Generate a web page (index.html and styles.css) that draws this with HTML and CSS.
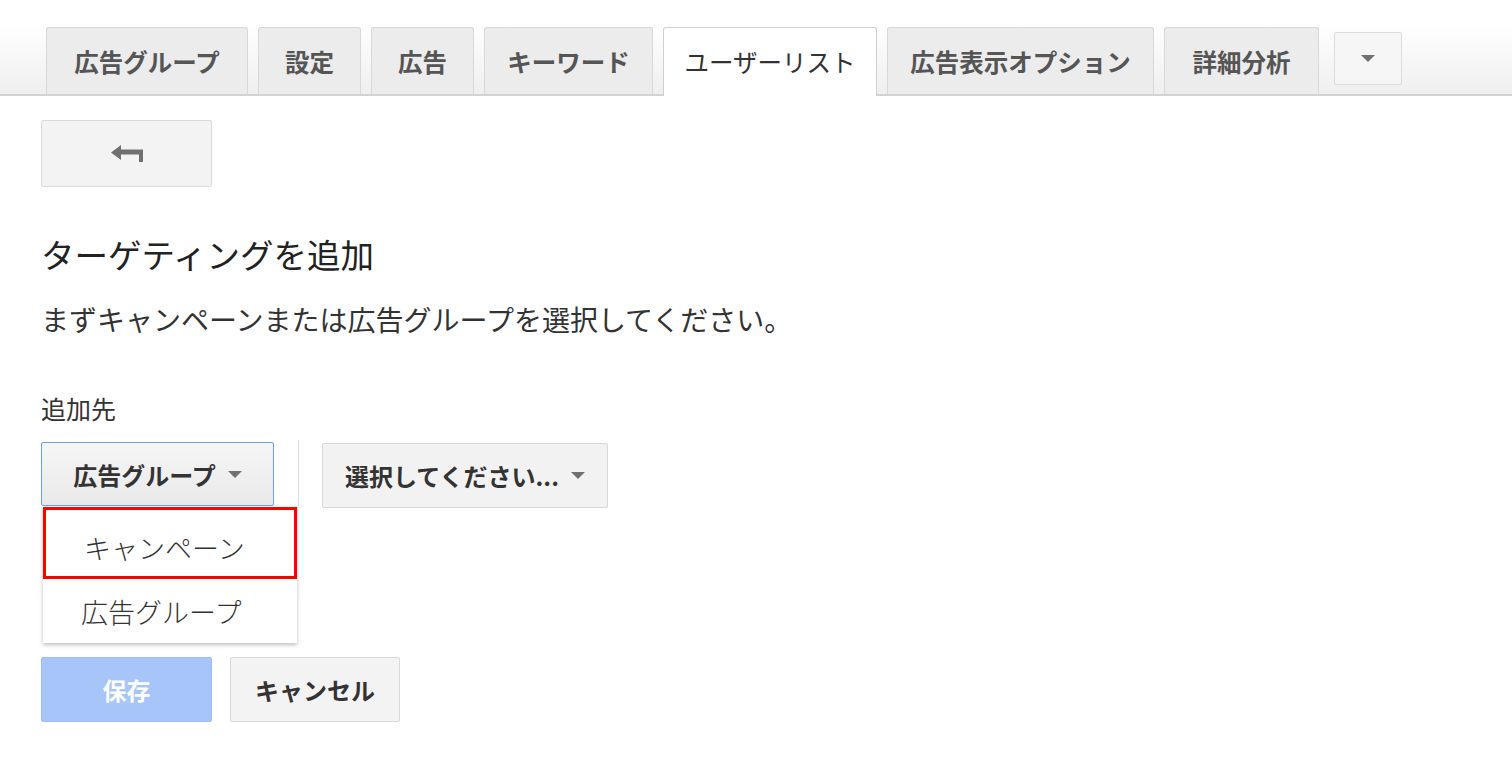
FILE: index.html
```html
<!DOCTYPE html>
<html lang="ja">
<head>
  <meta charset="UTF-8" />
  <title>ターゲティングを追加</title>
  <link rel="stylesheet" href="styles.css">
</head>
<body>

  <div class="tabbar">
    <div class="tab">広告グループ</div>
    <div class="tab">設定</div>
    <div class="tab">広告</div>
    <div class="tab">キーワード</div>
    <div class="tab active">ユーザーリスト</div>
    <div class="tab">広告表示オプション</div>
    <div class="tab">詳細分析</div>
    <div class="more"><span class="caret"></span></div>
  </div>

  <div class="content">
    <button class="back">
      <svg width="32" height="18" viewBox="0 0 32 18"><path d="M0 7.5L10 0V4.5H32V17H28V9.5H10V15Z" fill="#707070"/></svg>
    </button>

    <h1>ターゲティングを追加</h1>
    <p class="lead">まずキャンペーンまたは広告グループを選択してください。</p>

    <div class="label">追加先</div>

    <div class="pickrow">
      <button class="pick focus">広告グループ <span class="caret"></span></button>
      <div class="sep"></div>
      <button class="pick wide">選択してください... <span class="caret"></span></button>

      <div class="menu">
        <div class="item hl">キャンペーン</div>
        <div class="item">広告グループ</div>
      </div>
    </div>

    <div class="actions">
      <button class="btn save">保存</button>
      <button class="btn cancel">キャンセル</button>
    </div>
  </div>

</body>
</html>
```

FILE: styles.css
```css
body{
  margin:0;
  font-family:"Noto Sans CJK JP","Liberation Sans",sans-serif;
  color:#333;
  background:#fff
}
.tabbar{
  height:94px;
  display:flex;
  align-items:flex-end;
  gap:10px;
  padding-left:46px;
  border-bottom:2px solid #d3d3d3;
  background:linear-gradient(#fff 25%,#efefef)
}
.tab{
  box-sizing:border-box;
  height:67px;
  display:flex;
  align-items:center;
  justify-content:center;
  background:#ececec;
  border:1px solid #d8d8d8;
  border-bottom:none;
  border-radius:3px 3px 0 0;
  font-size:24.5px;
  font-weight:bold;
  color:#555
}
.tab:nth-child(1){width:202px}
.tab:nth-child(2){width:103px}
.tab:nth-child(3){width:103px}
.tab:nth-child(4){width:169px}
.tab:nth-child(5){width:214px}
.tab:nth-child(6){width:267px}
.tab:nth-child(7){width:155px}
.tab.active{
  background:#fff;
  border-color:#cfcfcf;
  height:69px;
  margin-bottom:-2px;
  padding-bottom:2px;
  font-weight:normal;
  color:#333
}
.more{
  box-sizing:border-box;
  width:68px;
  height:53px;
  margin:0 0 9px 5px;
  display:flex;
  align-items:center;
  justify-content:center;
  background:#f6f6f6;
  border:1px solid #dcdcdc;
  border-radius:2px
}
.caret{
  display:inline-block;
  width:0;
  height:0;
  border-left:7px solid transparent;
  border-right:7px solid transparent;
  border-top:7px solid #707070;
  vertical-align:middle
}
.content{padding-left:41px}
button{font-family:inherit;cursor:pointer}
.back{
  margin-top:24px;
  width:171px;
  height:67px;
  background:#f3f3f3;
  border:1px solid #dadada;
  border-radius:2px;
  display:flex;
  align-items:center;
  justify-content:center
}
h1{
  margin:47px 0 0;
  font-size:33.5px;
  line-height:40px;
  font-weight:normal;
  color:#222
}
.lead{
  margin:27px 0 0;
  font-size:28px;
  line-height:36px;
  color:#333
}
.label{
  margin-top:55px;
  font-size:25px;
  line-height:32px;
  color:#333
}
.pickrow{
  position:relative;
  margin-top:18px;
  display:flex;
  align-items:flex-start
}
.pick{
  box-sizing:border-box;
  height:64px;
  width:233px;
  background:linear-gradient(#f6f6f6,#e9e9e9);
  border:1px solid #d9d9d9;
  border-radius:2px;
  font-size:24px;
  font-weight:bold;
  color:#333;
  display:flex;
  align-items:center;
  justify-content:center;
  gap:12px
}
.pick.focus{border-color:#6d9ef2}
.pick.wide{
  width:286px;
  height:65px;
  margin-top:1px;
  background:#f2f2f2
}
.sep{
  width:1px;
  height:66px;
  margin:-2px 23px 0 24px;
  background:#dedede
}
.menu{
  position:absolute;
  left:2px;
  top:65px;
  width:254px;
  background:#fff;
  box-shadow:0 2px 4px rgba(0,0,0,.25)
}
.item{
  box-sizing:border-box;
  height:64px;
  padding-left:38px;
  display:flex;
  align-items:center;
  font-size:27px;
  font-weight:300;
  color:#333
}
.item.hl{
  height:72px;
  padding-top:8px;
  border:3px solid #f00
}
.actions{
  margin-top:149px;
  display:flex;
  gap:18px
}
.btn{
  box-sizing:border-box;
  width:171px;
  height:65px;
  border-radius:2px;
  font-size:24px;
  font-weight:bold
}
.save{
  background:#a8c5fa;
  border:1px solid #9fbdf5;
  color:#fff
}
.cancel{
  width:170px;
  background:#f3f3f3;
  border:1px solid #d9d9d9;
  color:#333
}
```
